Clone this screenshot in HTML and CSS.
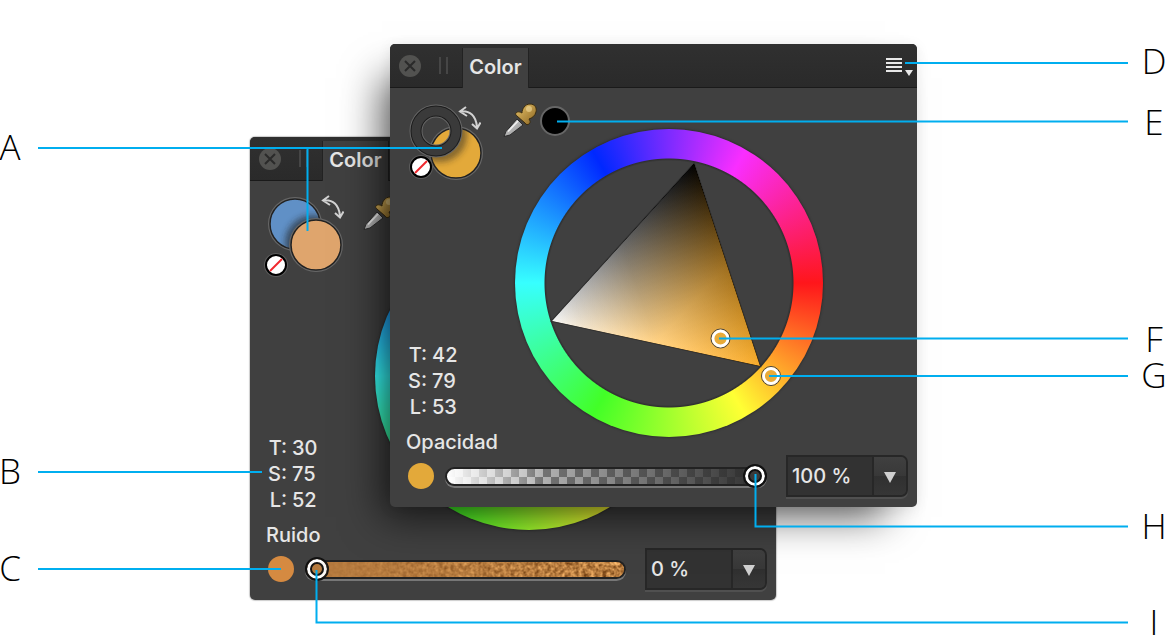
FILE: index.html
```html
<!DOCTYPE html>
<html lang="es">
<head>
<meta charset="utf-8">
<title>Panel Color</title>
<link rel="stylesheet" href="styles.css">
</head>
<body>
<svg class="defs" aria-hidden="true">
  <defs>
    <linearGradient id="tri-hue" gradientUnits="userSpaceOnUse" x1="245" y1="237" x2="108" y2="113">
      <stop offset="0" stop-color="#f8ac2c"/><stop offset=".5" stop-color="#9c6d1e"/><stop offset="1" stop-color="#000"/>
    </linearGradient>
    <linearGradient id="tri-white" gradientUnits="userSpaceOnUse" x1="37" y1="192" x2="212" y2="135">
      <stop offset="0" stop-color="#f6f6f6"/><stop offset=".15" stop-color="#c4c4c4"/><stop offset=".5" stop-color="#666"/><stop offset="1" stop-color="#000"/>
    </linearGradient>
    <linearGradient id="bulb" x1="0" y1="0" x2="1" y2="1">
      <stop offset="0" stop-color="#e9c46b"/><stop offset="1" stop-color="#8a6420"/>
    </linearGradient>
    <linearGradient id="glass" x1="0" y1="0" x2="1" y2="1">
      <stop offset="0" stop-color="#e2e2e2"/><stop offset="1" stop-color="#858585"/>
    </linearGradient>
    <filter id="grain" x="0" y="0" width="100%" height="100%" color-interpolation-filters="sRGB">
      <feTurbulence type="fractalNoise" baseFrequency="0.25" numOctaves="3" seed="4"/>
      <feColorMatrix values="0.9 0 0 0 0.27  0.8 0 0 0 0.09  0.6 0 0 0 -0.05  0 0 0 0 1"/>
    </filter>
    <filter id="soft" x="-30%" y="-30%" width="160%" height="160%"><feGaussianBlur stdDeviation="3"/></filter>
    <clipPath id="gold-clip"><circle cx="50" cy="53" r="25"/></clipPath>
    <clipPath id="blue-clip"><circle cx="29" cy="31" r="25"/></clipPath>
    <symbol id="i-close" viewBox="0 0 22 22">
      <circle cx="11" cy="11" r="11" fill="#525250"/>
      <path d="M6 6l10 10m0-10l-10 10" stroke="#2a2a2a" stroke-width="2" fill="none"/>
    </symbol>
    <symbol id="i-menu" viewBox="0 0 28 20">
      <path d="M1 3h16M1 7h16M1 11h16M1 15h16" stroke="#e8e8e8" stroke-width="2"/>
      <path d="M20 14h8l-4 6z" fill="#e8e8e8"/>
    </symbol>
    <symbol id="i-picker" viewBox="0 0 36 36">
      <path d="M1 33.500L3 28.500 14 16l6 6L7 32z" fill="url(#glass)" stroke="#2c2c2c" stroke-width="1"/>
      <path d="M5 28.500L15 18" stroke="#f2f2f2" stroke-width="1.500"/>
      <path d="M13 10c2-2 4-1 6 0 0-4 3-9 8-9 5 0 7 4 6 8-1 4-4 6-7 7 1 2 2 3 0 5-1 1-3 1-4-1l-8-7c-1-1-2-2-1-3z" fill="url(#bulb)" stroke="#3a2c10" stroke-width="1"/>
      <circle cx="26" cy="6" r="3" fill="#f3dc9c" opacity=".6"/>
    </symbol>
    <symbol id="i-swap" viewBox="0 0 24 26">
      <path d="M3 5.500C13 4 19 10 20 21M9 1L3 5.500 10 10M15 18L20 22.500 23.500 16.500" fill="none" stroke="#d2d2d2" stroke-width="2"/>
    </symbol>
    <symbol id="i-none" viewBox="0 0 24 24">
      <circle cx="12" cy="12" r="12" fill="#5c5c5c"/>
      <circle cx="12" cy="12" r="10" fill="#fff" stroke="#000" stroke-width="2"/>
      <path d="M6 18L18 6" stroke="#f0282d" stroke-width="2"/>
    </symbol>
    <symbol id="i-triangle" viewBox="0 0 308 308">
      <path d="M179 35L37 192 245 237z" fill="#000" stroke="#303030" stroke-width="2"/>
      <g class="blend">
        <path d="M179 35L37 192 245 237z" fill="#000"/>
        <path class="add" d="M179 35L37 192 245 237z" fill="url(#tri-hue)"/>
        <path class="add" d="M179 35L37 192 245 237z" fill="url(#tri-white)"/>
      </g>
      <g fill="#e9ab38" stroke="#444">
        <circle cx="205.500" cy="209.500" r="9.500"/><circle cx="256" cy="247" r="9.500"/>
      </g>
      <g fill="none" stroke="#fff" stroke-width="2.800">
        <circle cx="205.500" cy="209.500" r="7.500"/><circle cx="256" cy="247" r="7.500"/>
      </g>
    </symbol>
  </defs>
</svg>

<main class="figure">
  <section class="panel panel-back" aria-label="Color, ruido">
    <header class="bar">
      <button class="close" type="button" aria-label="Cerrar"><svg><use href="#i-close"/></svg></button>
      <span class="grip"></span>
      <button class="tab" type="button">Color</button>
      <button class="menu" type="button" aria-label="Preferencias"><svg><use href="#i-menu"/></svg></button>
    </header>
    <div class="body">
      <div class="side">
        <svg class="swatches" viewBox="0 0 88 84">
          <circle cx="29" cy="31" r="27" fill="#666"/>
          <circle cx="29" cy="31" r="25" fill="#6090c6" stroke="#222" stroke-width="1.500"/>
          <circle cx="47" cy="50" r="28" fill="#222" opacity=".6" filter="url(#soft)" clip-path="url(#blue-clip)"/>
          <circle cx="50" cy="52" r="27" fill="#666"/>
          <circle cx="50" cy="52" r="25" fill="#dfa56d" stroke="#222" stroke-width="1.500"/>
          <use href="#i-none" x="-2" y="60" width="24" height="24"/>
          <use href="#i-swap" x="54" y="2" width="24" height="26"/>
        </svg>
        <div class="readout">
          <dl class="values"><dt>T:</dt><dd>30</dd><dt>S:</dt><dd>75</dd><dt>L:</dt><dd>52</dd></dl>
          <label for="noise">Ruido</label>
        </div>
      </div>
      <div class="picker">
        <div class="tools">
          <button class="dropper" type="button" aria-label="Cuentagotas"><svg><use href="#i-picker"/></svg></button>
          <button class="picked" type="button" aria-label="Color muestreado"></button>
        </div>
        <div class="wheel"><svg><use href="#i-triangle"/></svg></div>
      </div>
    </div>
    <footer class="controls">
      <span class="dot dot-noise"></span>
      <div class="slider">
        <div class="track track-noise"><svg><rect width="100%" height="100%" filter="url(#grain)"/></svg></div>
        <input class="range range-noise" id="noise" type="range" min="0" max="100" value="0">
      </div>
      <div class="field">
        <input type="text" value="0 %" aria-label="Valor de ruido">
        <button type="button" aria-label="Abrir"><span class="caret"></span></button>
      </div>
    </footer>
  </section>

  <section class="panel panel-front" aria-label="Color, opacidad">
    <header class="bar">
      <button class="close" type="button" aria-label="Cerrar"><svg><use href="#i-close"/></svg></button>
      <span class="grip"></span>
      <button class="tab" type="button">Color</button>
      <button class="menu" type="button" aria-label="Preferencias"><svg><use href="#i-menu"/></svg></button>
    </header>
    <div class="body">
      <div class="side">
        <svg class="swatches" viewBox="0 0 88 84">
          <circle cx="50" cy="53" r="27" fill="#666"/>
          <circle cx="50" cy="53" r="25" fill="#e3a93a" stroke="#222" stroke-width="1.500"/>
          <circle cx="34" cy="35" r="22" fill="none" stroke="#222" stroke-width="10" opacity=".5" filter="url(#soft)" clip-path="url(#gold-clip)"/>
          <circle cx="30" cy="31" r="20" fill="none" stroke="#666" stroke-width="13"/>
          <circle cx="30" cy="31" r="20" fill="none" stroke="#1c1c1c" stroke-width="11"/>
          <circle cx="30" cy="31" r="20" fill="none" stroke="#3a3a3a" stroke-width="9"/>
          <use href="#i-none" x="3" y="55" width="24" height="24"/>
          <use href="#i-swap" x="51" y="6" width="24" height="26"/>
        </svg>
        <div class="readout">
          <dl class="values"><dt>T:</dt><dd>42</dd><dt>S:</dt><dd>79</dd><dt>L:</dt><dd>53</dd></dl>
          <label for="opacity">Opacidad</label>
        </div>
      </div>
      <div class="picker">
        <div class="tools">
          <button class="dropper" type="button" aria-label="Cuentagotas"><svg><use href="#i-picker"/></svg></button>
          <button class="picked" type="button" aria-label="Color muestreado"></button>
        </div>
        <div class="wheel"><svg><use href="#i-triangle"/></svg></div>
      </div>
    </div>
    <footer class="controls">
      <span class="dot dot-opacity"></span>
      <div class="slider">
        <div class="track track-opacity"></div>
        <input class="range range-opacity" id="opacity" type="range" min="0" max="100" value="100">
      </div>
      <div class="field">
        <input type="text" value="100 %" aria-label="Valor de opacidad">
        <button type="button" aria-label="Abrir"><span class="caret"></span></button>
      </div>
    </footer>
  </section>

  <svg class="callouts" width="1165" height="635">
    <path class="leader" d="M38 148H442M307.500 148V231M38 472H262M38 569H281M905 63H1128M557 121.500H1128M719 338.500H1128M769 376H1128M755.500 474V526.500H1128M316.500 570V622.500H1128"/>
    <g class="keys">
      <text x="10" y="160">A</text><text x="10" y="484">B</text><text x="10" y="581">C</text>
    </g>
    <g class="keys">
      <text x="1154" y="74">D</text><text x="1154" y="135">E</text><text x="1154" y="352">F</text>
      <text x="1154" y="388">G</text><text x="1154" y="539">H</text><text x="1154" y="635">I</text>
    </g>
  </svg>
</main>
</body>
</html>
```

FILE: styles.css
```css
* { box-sizing: border-box; }

body {
  margin: 0;
  background: #fff;
  color: #e6e6e6;
  font: 500 20px/26px Inter, "Liberation Sans", sans-serif;
}

.defs { position: absolute; width: 0; height: 0; }

.figure {
  position: relative;
  min-height: 100vh;
  overflow: hidden;
}

button, input {
  margin: 0;
  padding: 0;
  border: 0;
  background: none;
  color: inherit;
  font: inherit;
}

button svg { display: block; width: 100%; height: 100%; }

/* Panels */
.panel {
  position: absolute;
  width: 527px;
  background: #404040;
  border-radius: 5px;
  overflow: hidden;
}
.panel-back { left: 250px; top: 137px; width: 526px; box-shadow: 0 0 1px 1px rgba(0, 0, 0, .2); }
.panel-front { left: 390px; top: 44px; box-shadow: -20px 22px 38px -12px rgba(0, 0, 0, .65), 0 2px 14px rgba(0, 0, 0, .08); }

.bar {
  display: flex;
  align-items: center;
  height: 44px;
  padding: 0 4px 0 9px;
  background: linear-gradient(#303030, #2a2a2a);
  border-bottom: 1px solid #1a1a1a;
}
.close { width: 22px; height: 22px; }
.grip {
  width: 9px;
  height: 17px;
  margin: 0 15px 0 18px;
  border: solid #464646;
  border-width: 0 2px;
}
.tab {
  align-self: flex-end;
  width: 65px;
  height: 40px;
  margin-bottom: -1px;
  padding-bottom: 2px;
  background: #404040;
  box-shadow: 0 0 0 1px #222;
  clip-path: inset(0 -1px);
  font-weight: 600;
}
.menu { width: 28px; height: 20px; margin-left: auto; }

.body {
  display: grid;
  grid-template-columns: 97px 1fr;
  padding: 12px 8px 0 16px;
}
.side {
  display: flex;
  flex-direction: column;
  justify-content: space-between;
}
.swatches { width: 88px; height: 84px; overflow: visible; }
.readout { display: grid; gap: 9px; }
.values {
  display: grid;
  grid-template-columns: 21px auto;
  column-gap: 5px;
  margin: 0;
}
.values dt { text-align: right; }
.values dd { margin: 0; }

.tools {
  display: flex;
  align-items: center;
  gap: 1px;
  height: 38px;
  padding-top: 4px;
}
.dropper { width: 36px; height: 36px; }
.picked {
  width: 30px;
  height: 30px;
  border: 2px solid #666;
  border-radius: 50%;
  background: #000;
}

.wheel {
  display: grid;
  width: 308px;
  height: 308px;
  margin: -9px 0 18px 12px;
  border-radius: 50%;
  background:
    radial-gradient(circle, #404040 122px, #303030 124px, transparent 125px),
    conic-gradient(from 30deg, #f92eff, #ff161b, #ffff34, #42ff27, #37ffff, #0028ff, #f92eff);
  box-shadow: 0 0 2px 1px #303030;
}
.wheel svg { width: 100%; height: 100%; }
.blend { isolation: isolate; }
.add { mix-blend-mode: plus-lighter; }

/* Slider row */
.controls {
  display: flex;
  align-items: center;
  padding: 0 9px 10px 18px;
}
.dot { width: 26px; height: 26px; border-radius: 50%; }
.dot-noise { background: #d58a41; }
.dot-opacity { background: #e3a93a; }

.slider {
  display: grid;
  flex: 1;
  align-items: center;
  margin: 0 19px 0 11px;
}
.slider > * { grid-area: 1 / 1; }
.track {
  width: 100%;
  height: 19px;
  border: 2px solid #222;
  border-radius: 10px;
  box-shadow: 0 2px 0 #777;
  overflow: hidden;
}
.track-noise { background: #b57a3e; }
.track-noise svg {
  display: block;
  width: 100%;
  height: 100%;
  -webkit-mask: linear-gradient(90deg, transparent, #000);
  mask: linear-gradient(90deg, transparent, #000);
}
.track-opacity {
  background:
    linear-gradient(90deg, #fff, rgba(255, 255, 255, 0) 30%),
    linear-gradient(90deg, rgba(44, 44, 44, 0) 25%, #2c2c2c 100%),
    repeating-conic-gradient(#bbb 0 25%, #777 0 50%) 0 0 / 16px 16px;
}
.range {
  appearance: none;
  width: 100%;
  height: 24px;
  margin-top: -1px;
}
.range::-webkit-slider-thumb {
  appearance: none;
  width: 24px;
  height: 24px;
  border: 2px solid #111;
  border-radius: 50%;
  box-shadow: inset 0 0 0 3px #fff, inset 0 0 0 5px #111;
}
.range-noise::-webkit-slider-thumb { background: #b57a3e; }
.range-opacity::-webkit-slider-thumb { background: #3a3a3a; }

.field {
  display: flex;
  width: 122px;
  height: 42px;
  border: 2px solid #272727;
  border-radius: 0 7px 7px 0;
  background: #323232;
  box-shadow: 0 2px 0 #505050;
}
.field input { flex: 1; min-width: 0; padding-left: 4px; }
.field button {
  display: grid;
  place-items: center;
  width: 34px;
  padding-top: 2px;
  border-left: 2px solid #272727;
  border-radius: 0 5px 5px 0;
  background: linear-gradient(#404040, #383838 50%, #303030 50%, #363636);
}
.caret {
  border: solid transparent;
  border-width: 11px 6px 0;
  border-top-color: #d0d0d0;
}

/* Callouts */
.callouts {
  position: absolute;
  inset: 0;
  overflow: visible;
  pointer-events: none;
}
.leader { fill: none; stroke: #00aeef; stroke-width: 2; }
.keys {
  fill: #000;
  font: 300 35px "Open Sans", "Noto Sans", sans-serif;
  text-anchor: middle;
}
```
